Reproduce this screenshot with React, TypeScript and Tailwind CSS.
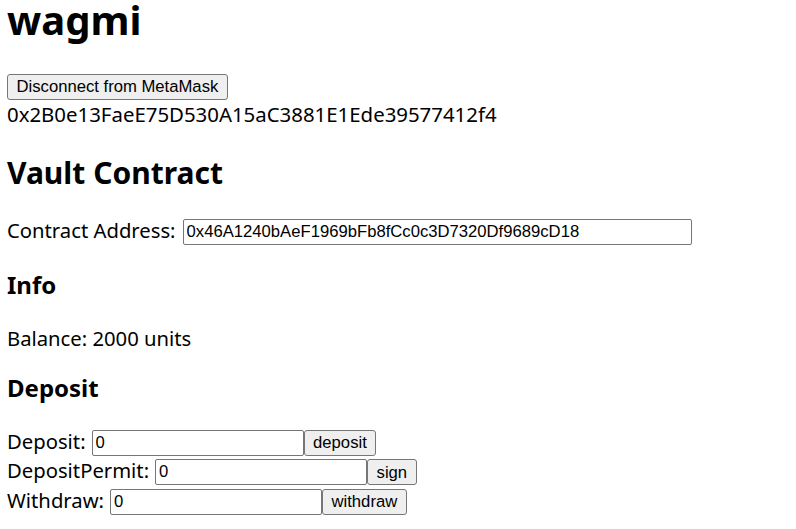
import React from "react";

const sans = "font-['Noto_Sans',sans-serif]";
const arial = "font-['Liberation_Sans',Arial,sans-serif]";

const Button: React.FC<{ label: string }> = ({ label }) => (
  <button
    className={`${arial} h-[26px] px-[8.5px] pt-px bg-[#efefef] border border-[#767676] rounded-[3px] text-[16.67px] text-black leading-none`}
  >
    {label}
  </button>
);

const Field: React.FC<{ value: string; width: string }> = ({ value, width }) => (
  <input
    readOnly
    value={value}
    className={`${arial} ${width} h-[26px] px-[3px] border border-[#767676] rounded-[2px] text-[16.67px] text-black bg-white outline-none`}
  />
);

const ActionRow: React.FC<{ label: string; action: string }> = ({ label, action }) => (
  <div className="flex items-center h-[29.3px]">
    <span className="mb-[4px] mr-[6px]">{label}</span>
    <Field value="0" width="w-[212px]" />
    <Button label={action} />
  </div>
);

export default function App() {
  return (
    <div className={`${sans} min-h-screen bg-white text-black text-[20.25px] px-[7px]`}>
      <h1 className="text-[40px] font-bold leading-[44px] -mt-[2px]">wagmi</h1>

      <div className="mt-[32px] h-[26px] flex">
        <Button label="Disconnect from MetaMask" />
      </div>
      <div className="leading-[28px] text-[20.4px]">0x2B0e13FaeE75D530A15aC3881E1Ede39577412f4</div>

      <h2 className="mt-[27px] text-[30px] font-bold leading-[36px]">Vault Contract</h2>

      <div className="mt-[28px] flex items-center h-[26px]">
        <span className="mb-[4px] mr-[7px]">Contract Address:</span>
        <Field value="0x46A1240bAeF1969bFb8fCc0c3D7320Df9689cD18" width="w-[509px]" />
      </div>

      <h3 className="mt-[26px] text-[24px] font-bold leading-[28px]">Info</h3>
      <p className="mt-[25px] leading-[28px]">Balance: 2000 units</p>

      <h3 className="mt-[22px] text-[24px] font-bold leading-[28px]">Deposit</h3>

      <div className="mt-[26.5px]">
        <ActionRow label="Deposit:" action="deposit" />
        <ActionRow label="DepositPermit:" action="sign" />
        <ActionRow label="Withdraw:" action="withdraw" />
      </div>
    </div>
  );
}
